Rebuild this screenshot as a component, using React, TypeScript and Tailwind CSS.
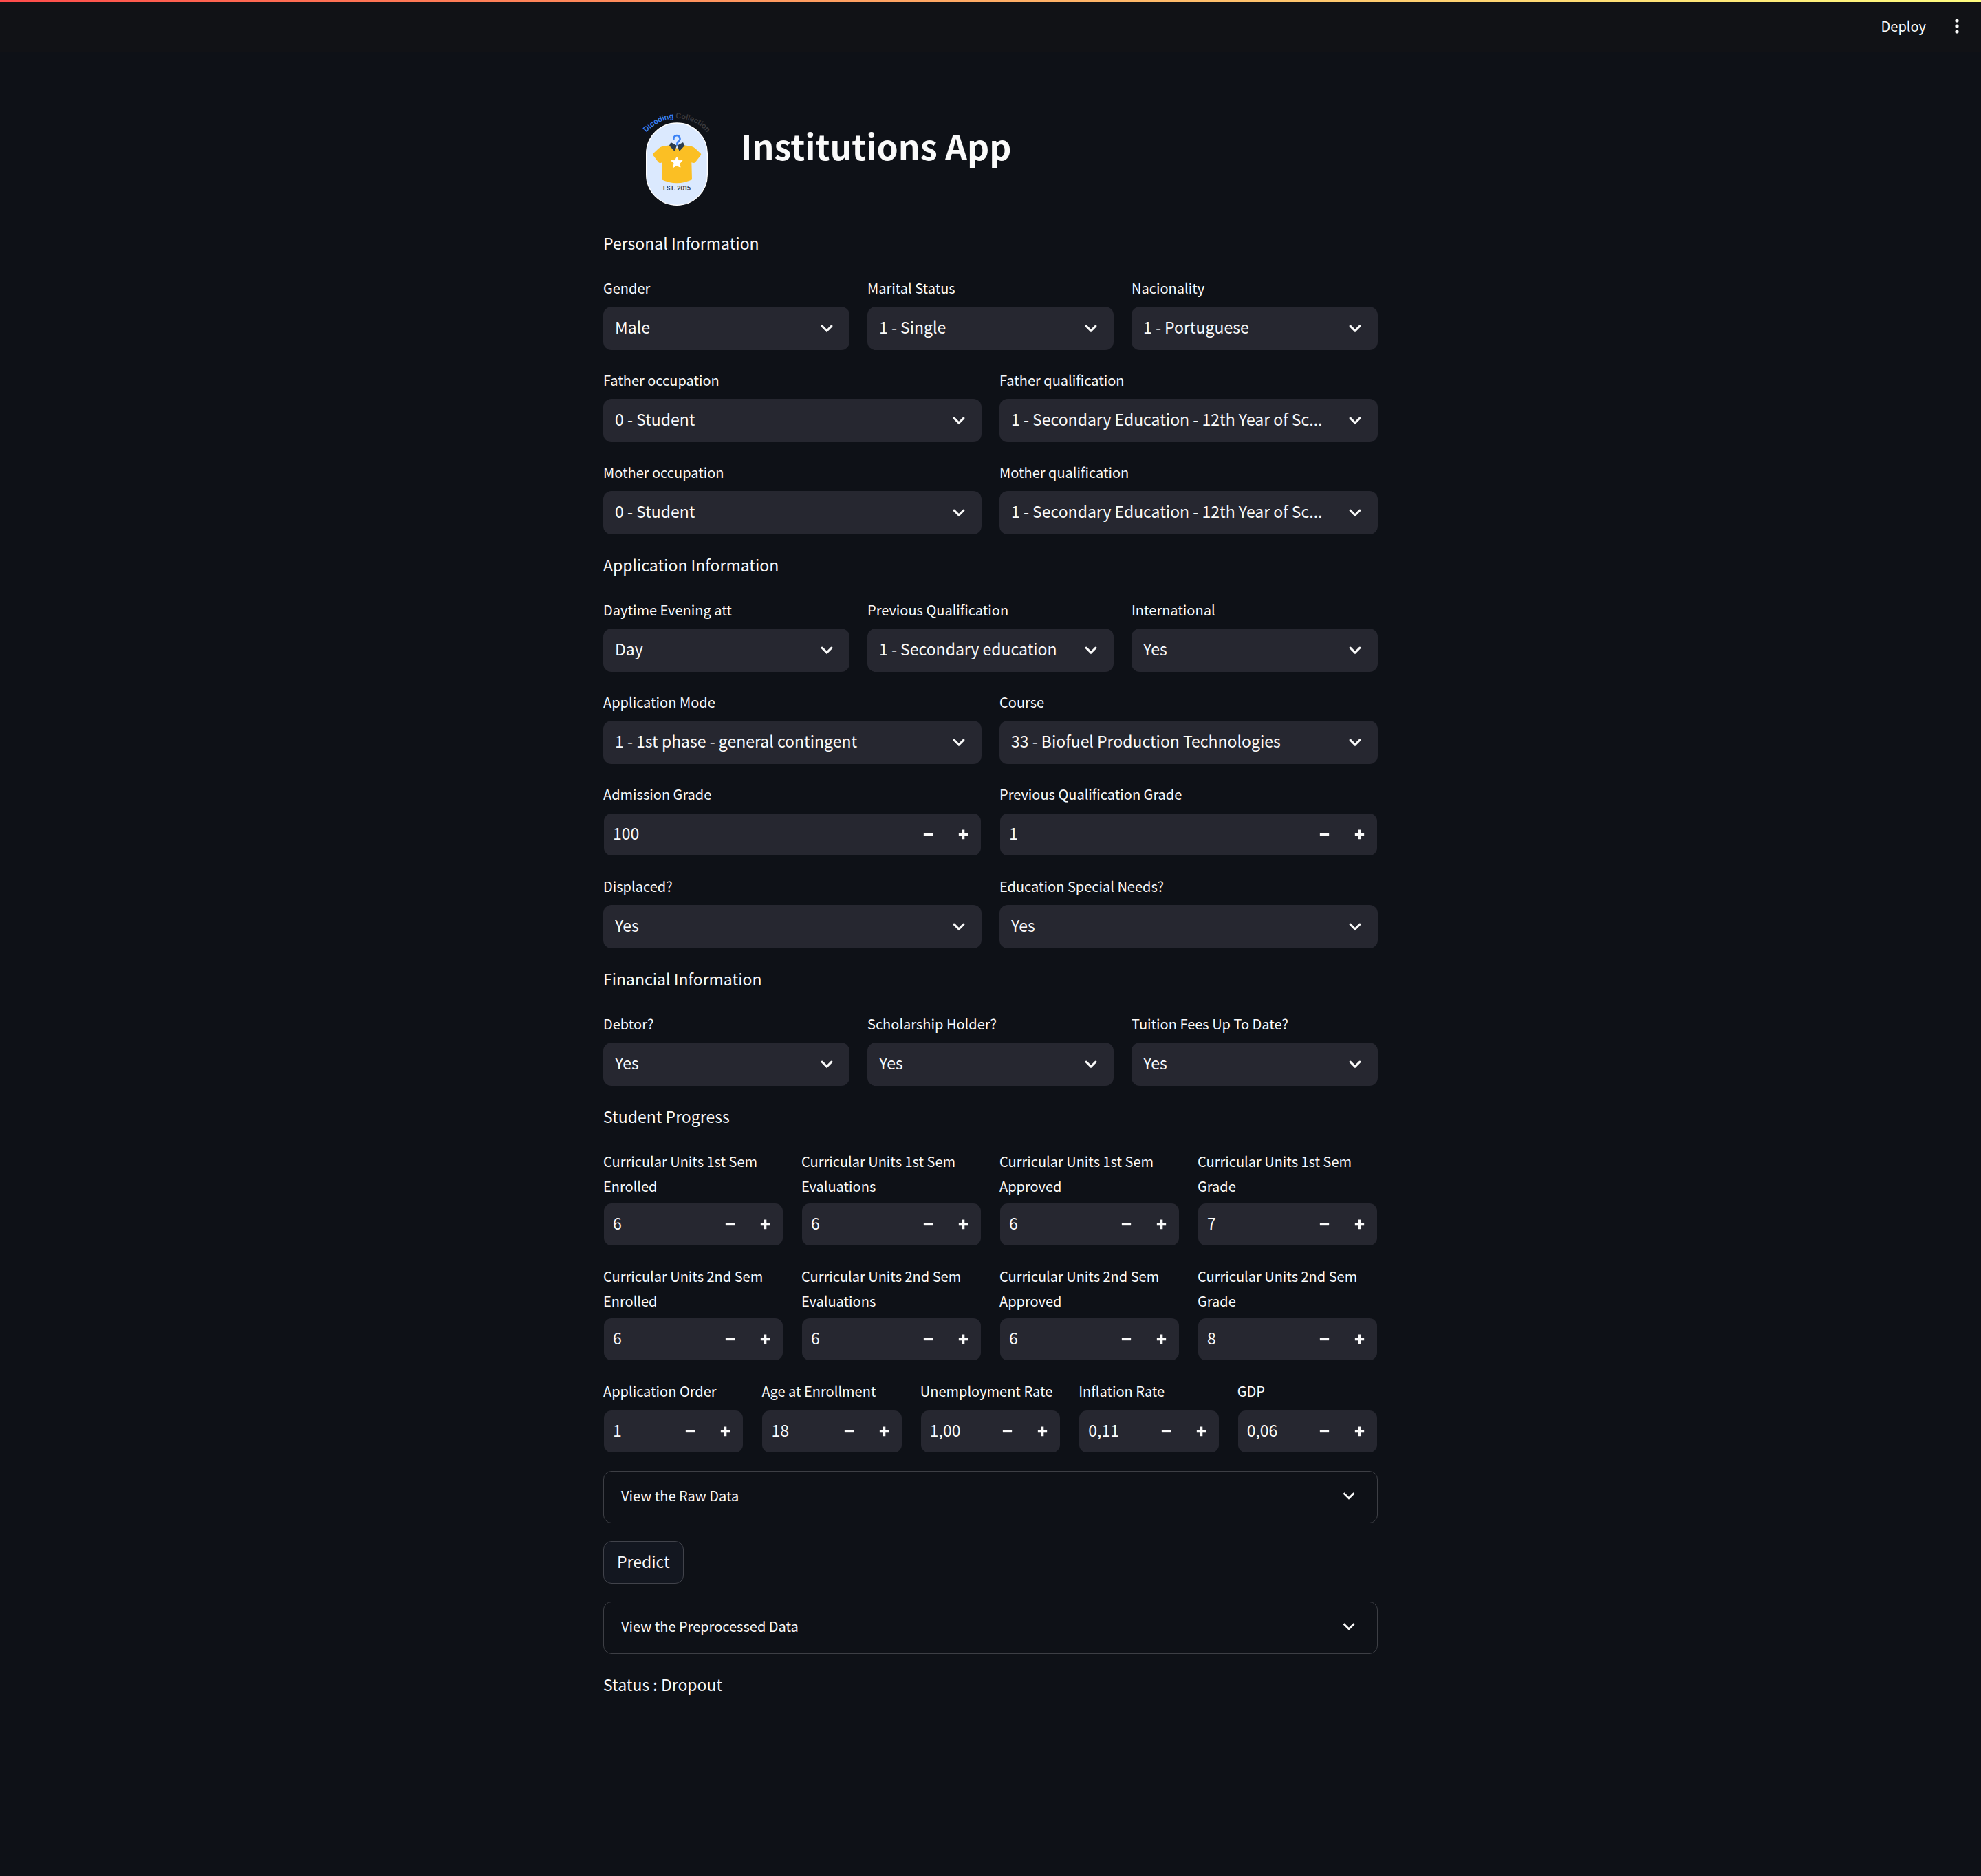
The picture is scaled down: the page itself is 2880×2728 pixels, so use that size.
import React, { useState } from 'react';

type FieldProps = { id: string; label: string; value: string };

function Label({ id, children }: { id: string; children: React.ReactNode }) {
  return (
    <label htmlFor={id} className="mb-1.5 block min-h-[39px] text-[20px] leading-[36px]">
      {children}
    </label>
  );
}

function Chevron() {
  return (
    <svg
      viewBox="0 0 8 8"
      className="pointer-events-none absolute top-1/2 right-[22px] size-[22px] -translate-y-1/2"
      aria-hidden="true"
    >
      <path d="M1.5 2.6L4 5.1L6.5 2.6" fill="none" stroke="currentColor" strokeWidth="1.15" strokeLinecap="round" />
    </svg>
  );
}

function SelectField({ id, label, value }: FieldProps) {
  return (
    <div className="min-w-0 flex-1">
      <Label id={id}>{label}</Label>
      <div className="relative">
        <select
          id={id}
          className="h-[63px] w-full appearance-none truncate rounded-xl bg-[#262730] pr-14 pb-1 pl-[17px] text-[23px] outline-none"
        >
          <option>{value}</option>
        </select>
        <Chevron />
      </div>
    </div>
  );
}

function NumberField({ id, label, value }: FieldProps) {
  const [current, setCurrent] = useState(value);
  const step = (delta: number) => {
    const decimals = value.includes(',') ? 2 : 0;
    const next = parseFloat(current.replace(',', '.')) + delta;
    setCurrent(next.toFixed(decimals).replace('.', ','));
  };
  const unit = value.includes(',') ? 0.01 : 1;
  return (
    <div className="min-w-0 flex-1">
      <Label id={id}>{label}</Label>
      <div className="flex h-[63px] rounded-xl border border-transparent bg-[#262730] bg-clip-padding">
        <input
          id={id}
          value={current}
          inputMode="decimal"
          onChange={(e) => setCurrent(e.target.value)}
          className="min-w-0 flex-1 bg-transparent pb-1 pl-[13px] text-[23px] outline-none"
        />
        <button type="button" aria-label={`Decrease ${label}`} onClick={() => step(-unit)} className="flex w-[51px] items-center justify-center">
          <svg viewBox="0 0 8 8" className="size-[19px] fill-current" aria-hidden="true">
            <path d="M1.2 3.2h5.6v1.5H1.2z" />
          </svg>
        </button>
        <button type="button" aria-label={`Increase ${label}`} onClick={() => step(unit)} className="flex w-[51px] items-center justify-center">
          <svg viewBox="0 0 8 8" className="size-[19px] fill-current" aria-hidden="true">
            <path d="M3.25 1.1h1.5v2.1h2.05v1.5H4.75v2.1h-1.5V4.7H1.2V3.2h2.05z" />
          </svg>
        </button>
      </div>
    </div>
  );
}

function Row({ children }: { children: React.ReactNode }) {
  return <div className="flex gap-[26px]">{children}</div>;
}

function Heading({ children }: { children: React.ReactNode }) {
  return <h2 className="pb-1 text-[23px] leading-[36px]">{children}</h2>;
}

function Expander({ title }: { title: string }) {
  return (
    <button
      type="button"
      aria-expanded="false"
      className="flex h-[76px] w-full items-center justify-between rounded-xl border border-[#3d3f45] pr-[26px] pb-1 pl-[25px] text-left text-[20px]"
    >
      {title}
      <svg viewBox="0 0 24 24" className="size-[30px]" aria-hidden="true">
        <path d="M6 9l6 6 6-6" fill="none" stroke="currentColor" strokeWidth="2.2" />
      </svg>
    </button>
  );
}

function Logo() {
  return (
    <svg viewBox="21 12 462 468" className="h-[156px] w-[154px] shrink-0 overflow-visible" role="img" aria-label="Dicoding Collection">
      <defs>
        <path id="arc" d="M90 180A174 174 0 0 1 414 180" />
      </defs>
      <text fontFamily="Inter" fontSize="32" fontWeight="600" textAnchor="middle">
        <textPath href="#arc" startOffset="50%">
          <tspan fill="#3b82f6">Dicoding</tspan>
          <tspan fill="#3a3b40"> Collection</tspan>
        </textPath>
      </text>
      <rect x="119" y="90" width="266" height="358" rx="133" fill="#dbe9fe" stroke="#ffffff" strokeWidth="4" />
      <path
        d="M222 187L190 191Q180 193 172 201L149 223Q146 227 149 231L171 260Q175 265 181 264L188 262L186 337Q218 352 252 352Q286 352 318 337L316 262L323 264Q329 265 333 260L356 231Q359 227 356 223L333 201Q325 193 315 191L283 187L252 200Z"
        fill="#fbbf24"
      />
      <path d="M238 161A14 14 0 1 1 262 168Q253 172 253 184" fill="none" stroke="#3b82f6" strokeWidth="8" strokeLinecap="round" />
      <path d="M226 174L219 188L242 213L252 188ZM279 174L286 188L263 213L253 188Z" fill="#2c3e50" />
      <path
        d="M252 237L259 252L276 254L264 266L267 283L252 275L237 283L240 266L228 254L245 252Z"
        fill="#ffffff"
        stroke="#ffffff"
        strokeWidth="3"
        strokeLinejoin="round"
      />
      <text x="252" y="384" fontFamily="Inter" fontSize="25" fontWeight="700" textAnchor="middle" fill="#334155">
        EST. 2015
      </text>
    </svg>
  );
}

export default function App() {
  return (
    <div className="min-h-screen bg-[#0e1117] font-['Noto_Sans_CJK_SC',sans-serif] text-[#fafafa]">
      <header className="absolute inset-x-0 top-0">
        <div className="h-[3px] bg-linear-to-r from-[#ff4b4b] to-[#fffd80]" />
        <div className="flex h-[72px] items-center justify-end gap-8 bg-[#111216] pr-[22px]">
          <button type="button" className="pb-0.5 text-[20px] leading-[36px]">
            Deploy
          </button>
          <button type="button" aria-label="Main menu">
            <svg viewBox="0 0 26 26" className="size-[26px] fill-current" aria-hidden="true">
              <circle cx="13" cy="4" r="2.6" />
              <circle cx="13" cy="12" r="2.6" />
              <circle cx="13" cy="20" r="2.6" />
            </svg>
          </button>
        </div>
      </header>
      <main className="mx-auto flex max-w-[1126px] flex-col gap-[26px] pt-[153px] pb-64">
        <div className="flex gap-4 pl-[30px]">
          <Logo />
          <h1 className="pt-[23px] text-[50px] leading-[70px] font-bold">Institutions App</h1>
        </div>

        <Heading>Personal Information</Heading>
        <Row>
          <SelectField id="gender" label="Gender" value="Male" />
          <SelectField id="marital" label="Marital Status" value="1 - Single" />
          <SelectField id="nacionality" label="Nacionality" value="1 - Portuguese" />
        </Row>
        <Row>
          <SelectField id="father-occ" label="Father occupation" value="0 - Student" />
          <SelectField id="father-qual" label="Father qualification" value="1 - Secondary Education - 12th Year of Sc..." />
        </Row>
        <Row>
          <SelectField id="mother-occ" label="Mother occupation" value="0 - Student" />
          <SelectField id="mother-qual" label="Mother qualification" value="1 - Secondary Education - 12th Year of Sc..." />
        </Row>

        <Heading>Application Information</Heading>
        <Row>
          <SelectField id="daytime" label="Daytime Evening att" value="Day" />
          <SelectField id="prev-qual" label="Previous Qualification" value="1 - Secondary education" />
          <SelectField id="international" label="International" value="Yes" />
        </Row>
        <Row>
          <SelectField id="app-mode" label="Application Mode" value="1 - 1st phase - general contingent" />
          <SelectField id="course" label="Course" value="33 - Biofuel Production Technologies" />
        </Row>
        <Row>
          <NumberField id="admission" label="Admission Grade" value="100" />
          <NumberField id="prev-grade" label="Previous Qualification Grade" value="1" />
        </Row>
        <Row>
          <SelectField id="displaced" label="Displaced?" value="Yes" />
          <SelectField id="special" label="Education Special Needs?" value="Yes" />
        </Row>

        <Heading>Financial Information</Heading>
        <Row>
          <SelectField id="debtor" label="Debtor?" value="Yes" />
          <SelectField id="scholarship" label="Scholarship Holder?" value="Yes" />
          <SelectField id="tuition" label="Tuition Fees Up To Date?" value="Yes" />
        </Row>

        <Heading>Student Progress</Heading>
        <Row>
          <NumberField id="s1-enrolled" label="Curricular Units 1st Sem Enrolled" value="6" />
          <NumberField id="s1-evaluations" label="Curricular Units 1st Sem Evaluations" value="6" />
          <NumberField id="s1-approved" label="Curricular Units 1st Sem Approved" value="6" />
          <NumberField id="s1-grade" label="Curricular Units 1st Sem Grade" value="7" />
        </Row>
        <Row>
          <NumberField id="s2-enrolled" label="Curricular Units 2nd Sem Enrolled" value="6" />
          <NumberField id="s2-evaluations" label="Curricular Units 2nd Sem Evaluations" value="6" />
          <NumberField id="s2-approved" label="Curricular Units 2nd Sem Approved" value="6" />
          <NumberField id="s2-grade" label="Curricular Units 2nd Sem Grade" value="8" />
        </Row>
        <Row>
          <NumberField id="order" label="Application Order" value="1" />
          <NumberField id="age" label="Age at Enrollment" value="18" />
          <NumberField id="unemployment" label="Unemployment Rate" value="1,00" />
          <NumberField id="inflation" label="Inflation Rate" value="0,11" />
          <NumberField id="gdp" label="GDP" value="0,06" />
        </Row>

        <Expander title="View the Raw Data" />
        <button type="button" className="h-[62px] self-start rounded-xl border border-[#41434b] bg-[#131720] px-[19px] pb-1 text-[23px]">
          Predict
        </button>
        <Expander title="View the Preprocessed Data" />
        <p className="pb-1 text-[23px] leading-[36px]">Status : Dropout</p>
      </main>
    </div>
  );
}
